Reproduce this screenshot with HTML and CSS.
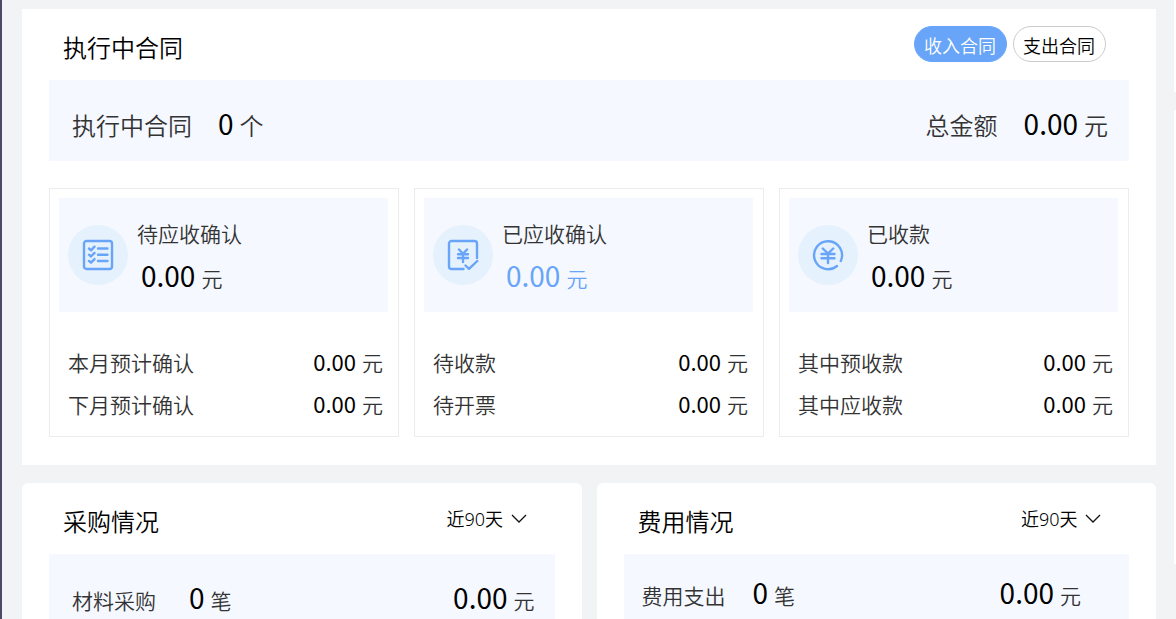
FILE: index.html
```html
<!DOCTYPE html>
<html lang="zh-CN">
<head>
<meta charset="utf-8">
<title>合同概览</title>
<link rel="stylesheet" href="styles.css">
</head>
<body>
<div class="rail"></div>
<main class="main">
  <section class="card contracts">
    <header class="card-head">
      <h2 class="title">执行中合同</h2>
      <div class="tabs">
        <button class="tab tab-active" type="button" aria-pressed="true">收入合同</button>
        <button class="tab" type="button" aria-pressed="false">支出合同</button>
      </div>
    </header>
    <div class="banner banner-large">
      <div class="figure"><span class="label">执行中合同</span><span class="value"><b class="num">0</b><span class="unit">个</span></span></div>
      <div class="figure"><span class="label">总金额</span><span class="value"><b class="num">0.00</b><span class="unit">元</span></span></div>
    </div>
    <div class="stats">
      <article class="stat">
        <div class="stat-top">
          <span class="badge">
            <svg class="icon" viewBox="0 0 32 32" aria-hidden="true"><rect x="2" y="2" width="28" height="28" rx="2.5"/><path d="M7 9.500l2 1.800 3.500-3.600M7 15.700l2 1.800 3.500-3.600M7 21.900l2 1.800 3.500-3.600M16 9.500h9.500M16 15.800h9.500M16 22h9.500"/></svg>
          </span>
          <div class="stat-text">
            <h3 class="stat-name">待应收确认</h3>
            <p class="value"><b class="num">0.00</b><span class="unit">元</span></p>
          </div>
        </div>
        <dl class="rows">
          <div class="row"><dt>本月预计确认</dt><dd class="value"><b class="num">0.00</b><span class="unit">元</span></dd></div>
          <div class="row"><dt>下月预计确认</dt><dd class="value"><b class="num">0.00</b><span class="unit">元</span></dd></div>
        </dl>
      </article>
      <article class="stat">
        <div class="stat-top">
          <span class="badge">
            <svg class="icon" viewBox="0 0 32 32" aria-hidden="true"><path d="M16.500 30H4.500A2.500 2.500 0 0 1 2 27.500v-23A2.500 2.500 0 0 1 4.500 2h23A2.500 2.500 0 0 1 30 4.500V19M18.500 26.500l3.500 3.300 8.300-7.800M12 10.500l4 4.300 4-4.300M11 15.300h10M11 19h10M16 15v8"/></svg>
          </span>
          <div class="stat-text">
            <h3 class="stat-name">已应收确认</h3>
            <p class="value value-blue"><b class="num">0.00</b><span class="unit">元</span></p>
          </div>
        </div>
        <dl class="rows">
          <div class="row"><dt>待收款</dt><dd class="value"><b class="num">0.00</b><span class="unit">元</span></dd></div>
          <div class="row"><dt>待开票</dt><dd class="value"><b class="num">0.00</b><span class="unit">元</span></dd></div>
        </dl>
      </article>
      <article class="stat">
        <div class="stat-top">
          <span class="badge">
            <svg class="icon" viewBox="0 0 32 32" aria-hidden="true"><path d="M25 27A14 14 0 1 1 28.800 22M10.800 9.500l5.200 5 5.200-5M9.500 15h13M9.500 19.300h13M16 15v9"/></svg>
          </span>
          <div class="stat-text">
            <h3 class="stat-name">已收款</h3>
            <p class="value"><b class="num">0.00</b><span class="unit">元</span></p>
          </div>
        </div>
        <dl class="rows">
          <div class="row"><dt>其中预收款</dt><dd class="value"><b class="num">0.00</b><span class="unit">元</span></dd></div>
          <div class="row"><dt>其中应收款</dt><dd class="value"><b class="num">0.00</b><span class="unit">元</span></dd></div>
        </dl>
      </article>
    </div>
  </section>
  <div class="pair">
    <section class="card card-round">
      <header class="card-head">
        <h2 class="title">采购情况</h2>
        <div class="period">
          <select class="period-select" aria-label="采购情况时间范围"><option>近90天</option></select>
          <svg class="chevron" viewBox="0 0 16 10" aria-hidden="true"><path d="M1 1l7 7 7-7"/></svg>
        </div>
      </header>
      <div class="banner banner-purchase">
        <div class="figure"><span class="label">材料采购</span><span class="value"><b class="num">0</b><span class="unit">笔</span></span></div>
        <span class="value"><b class="num">0.00</b><span class="unit">元</span></span>
      </div>
    </section>
    <section class="card card-round">
      <header class="card-head">
        <h2 class="title">费用情况</h2>
        <div class="period">
          <select class="period-select" aria-label="费用情况时间范围"><option>近90天</option></select>
          <svg class="chevron" viewBox="0 0 16 10" aria-hidden="true"><path d="M1 1l7 7 7-7"/></svg>
        </div>
      </header>
      <div class="banner banner-expense">
        <div class="figure"><span class="label">费用支出</span><span class="value"><b class="num">0</b><span class="unit">笔</span></span></div>
        <span class="value"><b class="num">0.00</b><span class="unit">元</span></span>
      </div>
    </section>
  </div>
</main>
<aside class="side"><div class="side-card"></div><div class="side-card side-card-tall"></div></aside>
</body>
</html>
```
FILE: styles.css
```css
* {
  box-sizing: border-box;
}

body {
  display: grid;
  grid-template-columns: 2px minmax(0, 1fr) 2px;
  grid-template-rows: 100vh;
  height: 100vh;
  margin: 0;
  overflow: hidden;
  background: #f2f3f5;
  color: #333;
  font-family: "Noto Sans", "Noto Sans CJK SC", sans-serif;
  font-size: 21px;
  font-weight: 350;
  line-height: 30px;
}

h2,
h3,
p,
dl,
dd {
  margin: 0;
  font-weight: inherit;
}

button,
select {
  font: inherit;
}

.rail {
  background: #4a4b68;
}

.main {
  padding: 9px 18px 0 20px;
  overflow: hidden;
}

.side {
  display: flex;
  flex-direction: column;
  gap: 18px;
}

.side-card {
  height: 92px;
  background: #fff;
}

.side-card-tall {
  height: 454px;
}

.card {
  padding: 0 27px 28px;
  background: #fff;
}

.card-round {
  border-radius: 6px;
}

.card-head {
  display: flex;
  justify-content: space-between;
  align-items: center;
  height: 71px;
  padding: 6px 28px 0 14px;
}

.contracts .card-head {
  padding-right: 23px;
}

.title {
  color: #000;
  font-size: 24px;
}

.tabs {
  display: flex;
  gap: 6px;
  padding-bottom: 7px;
}

.tab {
  height: 36px;
  padding: 3px 10px 0 9px;
  border: 1px solid #ccc;
  border-radius: 18px;
  background: #fff;
  color: #000;
  font-size: 18px;
  line-height: 30px;
  white-space: nowrap;
}

.tab-active {
  border-color: #68a5f8;
  background: #68a5f8;
  color: #fff;
}

.banner {
  display: flex;
  justify-content: space-between;
  align-items: center;
  height: 81px;
  background: #f5f8ff;
}

.banner-large {
  padding: 8px 21px 0 23px;
  font-size: 24px;
}

.banner-purchase {
  padding: 8px 20px 0 23px;
}

.banner-expense {
  padding: 0 48px 2px 18px;
}

.figure {
  display: flex;
  align-items: baseline;
  gap: 26px;
}

.banner-purchase .figure {
  gap: 33px;
}

.banner-expense .figure {
  gap: 27px;
}

.value {
  display: flex;
  align-items: baseline;
  gap: 6px;
}

.num {
  color: #000;
  font-family: "Noto Sans CJK SC", sans-serif;
  font-size: 28px;
  font-weight: 400;
}

.stats {
  display: grid;
  grid-template-columns: repeat(3, minmax(0, 1fr));
  gap: 15px;
  margin-top: 27px;
}

.stat {
  padding: 9px 10px 9px 9px;
  border: 1px solid #ececec;
}

.stat-top {
  display: flex;
  align-items: center;
  gap: 9px;
  height: 114px;
  padding-left: 9px;
  background: #f5f8ff;
}

.badge {
  display: grid;
  place-items: center;
  width: 60px;
  height: 60px;
  border-radius: 50%;
  background: #e6f1fe;
}

.icon {
  width: 32px;
  height: 32px;
  fill: none;
  stroke: #68a5f8;
  stroke-width: 2.4;
  stroke-linecap: round;
  stroke-linejoin: round;
}

.stat-text {
  padding-top: 2px;
}

.stat-name {
  font-size: 21px;
}

.stat-text .value {
  padding: 11px 0 0 4px;
}

.value-blue,
.value-blue .num {
  color: #68a5f8;
}

.rows {
  padding: 28px 5px 3px 9px;
}

.row {
  display: flex;
  justify-content: space-between;
  align-items: baseline;
  height: 42px;
  padding-top: 6px;
}

.row .num {
  font-size: 22px;
}

.pair {
  display: grid;
  grid-template-columns: repeat(2, minmax(0, 1fr));
  gap: 15px;
  margin-top: 18px;
}

.period {
  display: flex;
  align-items: center;
  gap: 7px;
  padding-bottom: 6px;
}

.period-select {
  appearance: none;
  padding: 0;
  border: 0;
  background: transparent;
  color: #000;
  font-size: 18px;
}

.chevron {
  width: 16px;
  height: 10px;
  fill: none;
  stroke: #111;
  stroke-width: 1.3;
}
```
